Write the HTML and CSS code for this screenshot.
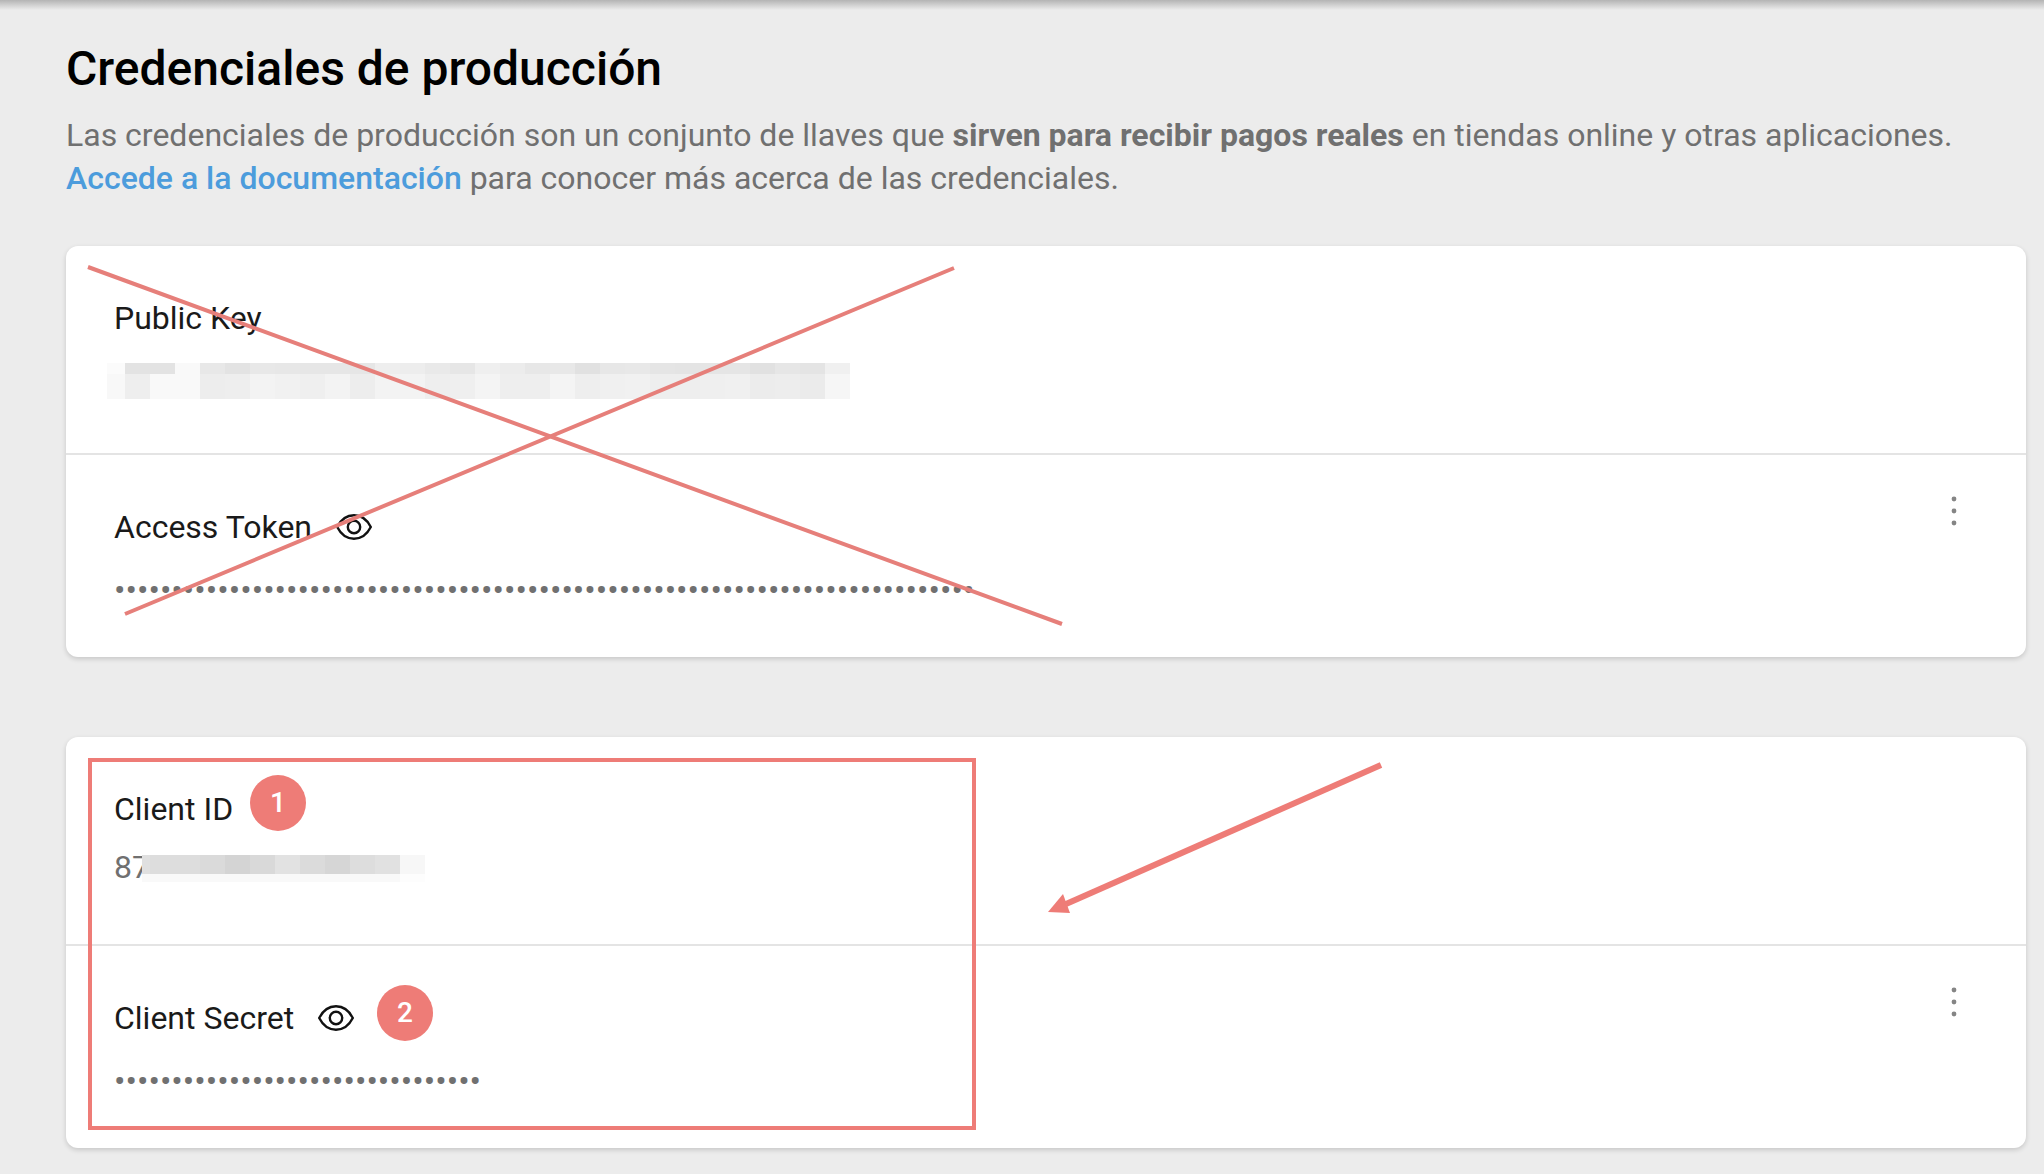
FILE: index.html
```html
<!DOCTYPE html>
<html lang="es">
<head>
    <meta charset="UTF-8">
    <meta name="viewport" content="width=device-width, initial-scale=1.0">
    <title>Credenciales de producción</title>
    <link rel="stylesheet" href="styles.css">
</head>
<body>
    <div class="top-shadow"></div>
    <main class="page">
        <header class="intro">
            <h1>Credenciales de producción</h1>
            <p>Las credenciales de producción son un conjunto de llaves que <strong>sirven para recibir pagos reales</strong> en tiendas online y otras aplicaciones. <a href="#">Accede a la documentación</a> para conocer más acerca de las credenciales.</p>
        </header>

        <!-- Public Key / Access Token -->
        <section class="card">
            <div class="row">
                <div class="field">
                    <div class="label">Public Key</div>
                    <div class="value"></div>
                </div>
            </div>
            <div class="row">
                <div class="field">
                    <div class="label">
                        Access Token
                        <button class="eye" type="button" aria-label="Mostrar Access Token">
                            <svg width="36" height="26" viewBox="0 0 36 26"><path d="M1.2 13C5 5.5 11 1.3 18 1.3S31 5.5 34.8 13C31 20.5 25 24.7 18 24.7S5 20.5 1.2 13Z"/><circle cx="18" cy="13" r="6.2"/></svg>
                        </button>
                    </div>
                    <div class="value dots">•••••••••••••••••••••••••••••••••••••••••••••••••••••••••••••••••••••••••••</div>
                </div>
                <button class="menu" type="button" aria-label="Más opciones">
                    <svg width="6" height="30" viewBox="0 0 6 30"><circle cx="3" cy="3" r="2.4"/><circle cx="3" cy="15" r="2.4"/><circle cx="3" cy="27" r="2.4"/></svg>
                </button>
            </div>
            <svg class="notes">
                <g id="key-mosaic"></g>
                <path class="cross" d="M22 21L996 378M59 368L888 22"/>
            </svg>
        </section>

        <!-- Client ID / Client Secret -->
        <section class="card">
            <div class="row">
                <div class="field">
                    <div class="label">Client ID</div>
                    <div class="value">87</div>
                </div>
            </div>
            <div class="row">
                <div class="field">
                    <div class="label">
                        Client Secret
                        <button class="eye" type="button" aria-label="Mostrar Client Secret">
                            <svg width="36" height="26" viewBox="0 0 36 26"><path d="M1.2 13C5 5.5 11 1.3 18 1.3S31 5.5 34.8 13C31 20.5 25 24.7 18 24.7S5 20.5 1.2 13Z"/><circle cx="18" cy="13" r="6.2"/></svg>
                        </button>
                    </div>
                    <div class="value dots">••••••••••••••••••••••••••••••••</div>
                </div>
                <button class="menu" type="button" aria-label="Más opciones">
                    <svg width="6" height="30" viewBox="0 0 6 30"><circle cx="3" cy="3" r="2.4"/><circle cx="3" cy="15" r="2.4"/><circle cx="3" cy="27" r="2.4"/></svg>
                </button>
            </div>
            <svg class="notes">
                <g id="id-mosaic"></g>
                <rect class="frame" x="24" y="23" width="884" height="368"/>
                <path class="arrow-line" d="M1000 167L1315 28"/>
                <path class="arrow-head" d="M982 175L997 157L1004 176Z"/>
            </svg>
            <span class="badge badge-one">1</span>
            <span class="badge badge-two">2</span>
        </section>
    </main>

    <script src="mosaic.js"></script>
</body>
</html>
```
FILE: styles.css
```css
body {
    font-family: Roboto, "Liberation Sans", sans-serif;
    margin: 0;
    background: #ececec;
    color: #1a1a1a;
}

.top-shadow {
    height: 10px;
    background: linear-gradient(#b4b4b4, #ececec);
}

.page {
    padding: 30px 18px 26px 66px;
}

.intro h1 {
    margin: 0 0 16px;
    font-size: 48px;
    line-height: 58px;
    font-weight: 500;
    color: #000;
}

.intro p {
    margin: 0 0 46px;
    font-size: 32px;
    line-height: 43px;
    color: #707070;
}

.intro strong {
    font-weight: 700;
}

.intro a {
    color: #4c9cdc;
    font-weight: 500;
    text-decoration: none;
}

.card {
    position: relative;
    background: #fff;
    border-radius: 12px;
    box-shadow: 0 2px 5px rgba(0,0,0,0.16);
}

.card + .card {
    margin-top: 80px;
}

.row {
    display: flex;
    justify-content: space-between;
    align-items: flex-start;
    padding: 32px 48px 52px;
}

.row + .row {
    border-top: 2px solid #e4e4e4;
}

.row:first-child {
    padding-bottom: 57px;
}

.field {
    padding-top: 20px;
}

.label {
    display: flex;
    align-items: center;
    gap: 24px;
    font-size: 32px;
    line-height: 40px;
}

.value {
    margin-top: 18px;
    height: 40px;
    font-size: 32px;
    line-height: 40px;
    color: #707070;
}

.dots {
    font-size: 34px;
    line-height: 50px;
}

button {
    display: flex;
    align-items: center;
    justify-content: center;
    padding: 0;
    border: none;
    background: none;
    cursor: pointer;
}

.eye svg {
    fill: none;
    stroke: #111;
    stroke-width: 2.4;
}

.menu {
    width: 48px;
    height: 48px;
}

.menu svg {
    fill: #858585;
}

/* Annotations drawn over the cards */
.notes {
    position: absolute;
    top: 0;
    left: 0;
    width: 100%;
    height: 100%;
    pointer-events: none;
}

.cross {
    fill: none;
    stroke: #e67f7a;
    stroke-width: 4;
}

.frame {
    fill: none;
    stroke: #ee7c77;
    stroke-width: 4;
}

.arrow-line {
    stroke: #ee7c77;
    stroke-width: 6;
}

.arrow-head {
    fill: #ee7c77;
}

.badge {
    position: absolute;
    width: 56px;
    height: 56px;
    border-radius: 50%;
    background: #ee7c77;
    color: #fff;
    font-size: 28px;
    line-height: 56px;
    font-weight: 500;
    text-align: center;
}

.badge-one {
    top: 38px;
    left: 184px;
}

.badge-two {
    top: 248px;
    left: 311px;
}
```
FILE: mosaic.js
```js
// Pixelated blocks that hide the key values
function mosaic(id, x, y, width, height, shades) {
    const group = document.getElementById(id);
    shades.split(' ').forEach((shade, i) => {
        const rect = document.createElementNS('http://www.w3.org/2000/svg', 'rect');
        rect.setAttribute('x', x + i * width);
        rect.setAttribute('y', y);
        rect.setAttribute('width', width);
        rect.setAttribute('height', height);
        rect.setAttribute('fill', '#' + shade.repeat(3));
        group.appendChild(rect);
    });
}

// Public Key
mosaic('key-mosaic', 41, 117, 18, 11, 'fb');
mosaic('key-mosaic', 41, 128, 18, 25, 'f8');
mosaic('key-mosaic', 59, 117, 25, 11, 'e3 e3 f9 e8 e3 e8 e7 e6 e6 e6 ee ed e9 e6 ef ec e7 e8 e1 e7 e8 e5 e4 e5 e5 e1 e6 e4 f0');
mosaic('key-mosaic', 59, 128, 25, 25, 'ee f9 f9 ed ee f3 f1 ef f3 ed f3 f3 ee ef f4 ee ee f4 ee f0 f1 ee ee ef f0 ec ed eb f6');

// Client ID
mosaic('id-mosaic', 76, 118, 8, 19, 'e0');
mosaic('id-mosaic', 76, 137, 8, 8, 'f9');
mosaic('id-mosaic', 84, 118, 25, 19, 'dd dd da d4 d9 e2 db d6 dd e1 f7');
mosaic('id-mosaic', 84, 137, 25, 8, 'f9 f9 f9 f9 f9 f9 f9 f9 f9 f9 fd');
```
